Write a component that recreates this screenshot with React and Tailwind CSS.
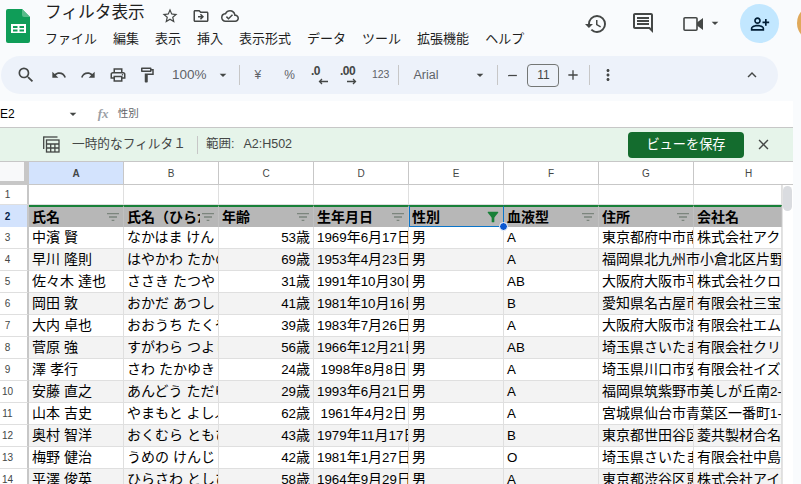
import {
  MdSearch, MdUndo, MdRedo, MdOutlineLocalPrintshop, MdOutlineFormatPaint, MdStarBorder, MdOutlineDriveFileMove,
  MdOutlineCloudDone, MdHistory, MdOutlineComment, MdOutlinePersonAddAlt, MdFilterList,
  MdFilterAlt, MdClose, MdMoreVert, MdExpandLess, MdAdd, MdRemove, MdArrowDropDown,
} from 'react-icons/md';

const FONT = { fontFamily: '"Liberation Sans", "Noto Sans CJK JP", sans-serif' };

const menus = ['ファイル', '編集', '表示', '挿入', '表示形式', 'データ', 'ツール', '拡張機能', 'ヘルプ'];
const columns = ['A', 'B', 'C', 'D', 'E', 'F', 'G'];
const headers = ['氏名', '氏名（ひらがな）', '年齢', '生年月日', '性別', '血液型', '住所', '会社名'];

const rows = [
  ['中濱 賢', 'なかはま けん', '53歳', '1969年6月17日', '男', 'A', '東京都府中市南町', '株式会社アクア'],
  ['早川 隆則', 'はやかわ たかのり', '69歳', '1953年4月23日', '男', 'A', '福岡県北九州市小倉北区片野4-1', ''],
  ['佐々木 達也', 'ささき たつや', '31歳', '1991年10月30日', '男', 'AB', '大阪府大阪市平野区', '株式会社クロード'],
  ['岡田 敦', 'おかだ あつし', '41歳', '1981年10月16日', '男', 'B', '愛知県名古屋市中区', '有限会社三宝'],
  ['大内 卓也', 'おおうち たくや', '39歳', '1983年7月26日', '男', 'A', '大阪府大阪市浪速区', '有限会社エムケー'],
  ['菅原 強', 'すがわら つよし', '56歳', '1966年12月21日', '男', 'AB', '埼玉県さいたま市', '有限会社クリエイト'],
  ['澤 孝行', 'さわ たかゆき', '24歳', '1998年8月8日', '男', 'A', '埼玉県川口市安行', '有限会社イズミ'],
  ['安藤 直之', 'あんどう ただゆき', '29歳', '1993年6月21日', '男', 'A', '福岡県筑紫野市美しが丘南2-1', ''],
  ['山本 吉史', 'やまもと よしふみ', '62歳', '1961年4月2日', '男', 'A', '宮城県仙台市青葉区一番町1-3', ''],
  ['奥村 智洋', 'おくむら ともひろ', '43歳', '1979年11月17日', '男', 'B', '東京都世田谷区', '菱共製材合名会社'],
  ['梅野 健治', 'うめの けんじ', '42歳', '1981年1月27日', '男', 'O', '埼玉県さいたま市', '有限会社中島商事'],
  ['平澤 俊英', 'ひらさわ としひで', '58歳', '1964年9月29日', '男', 'A', '東京都渋谷区恵比寿', '株式会社アイテム'],
];

const SheetsLogo = () => (
  <svg width="24" height="34" viewBox="0 0 24 34" className="shrink-0">
    <path d="M2 0h14l8 8v24a2 2 0 0 1-2 2H2a2 2 0 0 1-2-2V2a2 2 0 0 1 2-2z" fill="#0f9d58" />
    <path d="M16 0l8 8h-6a2 2 0 0 1-2-2z" fill="#57bb8a" />
    <path d="M5 15h15v9H5z M7 17v2h4.5v-2z M13.5 17v2H18v-2z M7 20.5v2h4.5v-2z M13.5 20.5v2H18v-2z" fill="#fff" fillRule="evenodd" />
  </svg>
);

const FilterViewIcon = () => (
  <svg width="17" height="17" viewBox="0 0 17 17" fill="none" stroke="#444746" strokeWidth="1.3">
    <path d="M0.7 0.5v12.5" />
    <path d="M0.5 1h14" />
    <rect x="3.5" y="4" width="12.5" height="12" />
    <path d="M3.5 8h12.5 M3.5 12h12.5 M7.7 8v8 M11.9 8v8" />
  </svg>
);

const VideoIcon = () => (
  <svg width="20" height="14" viewBox="0 0 20 14" className="ml-[28px] mt-[6px] shrink-0">
    <path d="M2 .8h11a1 1 0 0 1 1 1v10.4a1 1 0 0 1-1 1H2a1 1 0 0 1-1-1V1.800a1 1 0 0 1 1-1z" fill="none" stroke="#444746" strokeWidth="1.6" />
    <path d="M14 5.500L20 1v12l-6-4.500z" fill="#444746" />
  </svg>
);

function Decimal({ label, dir }) {
  return (
    <div className="relative w-[17px] h-[20px] shrink-0 text-[12px] font-bold leading-[13px] text-[#444746]">
      <span className="tracking-[-0.5px]">{label}</span>
      <svg width="10" height="7" viewBox="0 0 10 7" className="absolute right-0 bottom-0" fill="none" stroke="#444746" strokeWidth="1.3">
        {dir === 'left' ? <path d="M10 3.5H1.5M4 1L1.5 3.5L4 6" /> : <path d="M0 3.5h8.5M6 1l2.5 2.5L6 6" />}
      </svg>
    </div>
  );
}

function Divider({ className }) {
  return <div className={`w-px h-[20px] bg-[#c7c7c7] shrink-0 ${className}`} />;
}

function FilterIcon({ active }) {
  if (active) return <MdFilterAlt size={16} className="text-[#188038] shrink-0" />;
  return <MdFilterList size={16} className="text-[#7b857d] shrink-0" />;
}

// 英数字だけ少し小さくする
function CellText({ text }) {
  return text.split(/([0-9A-Za-z-]+)/).map((part, i) =>
    i % 2 === 1 ? <span key={i} className="text-[13.33px]">{part}</span> : part
  );
}

function HeaderCell({ text, index }) {
  const selected = index === 4;
  const last = index === 7;
  return (
    <div className={`relative h-[22px] flex items-center pr-[2px] bg-[#b7b7b7] border-t-2 border-t-[#188038] ${selected ? 'pl-[2px] border-[#0b75c9] border-x border-b border-t-[#188038]' : 'pl-[3px] border-r border-r-[#c0c0c0]'}`}>
      <div className="flex-1 min-w-0 overflow-hidden whitespace-nowrap text-[14px] font-bold leading-[20px] text-black">{text}</div>
      {!last && <FilterIcon active={selected} />}
      {selected && <div className="absolute -right-[5px] -bottom-[5px] w-[9px] h-[9px] rounded-full bg-[#0b57d0] border border-white z-10" />}
    </div>
  );
}

function DataRow({ num, row }) {
  const striped = num % 2 === 0;
  const bg = striped ? 'bg-[#f3f3f3]' : 'bg-white';
  const cell = `h-[22px] ${bg} border-r border-b border-[#dfdfdf] text-[14px] leading-[21px] text-black overflow-hidden whitespace-nowrap`;
  return (
    <>
      <div className="h-[22px] bg-white border-r-[2px] border-r-[#c7c7c7] border-b border-b-[#dfdfdf] flex items-center justify-center pr-[12px] text-[10px] text-[#444746]">{num}</div>
      <div className={`${cell} px-[3px]`}>{row[0]}</div>
      <div className={`${cell} px-[3px]`}>{row[1]}</div>
      <div className={`${cell} px-[3px] flex`}><span className="ml-auto shrink-0"><CellText text={row[2]} /></span></div>
      <div className={`${cell} pl-[3px] pr-[1px] flex`}><span className="ml-auto shrink-0"><CellText text={row[3]} /></span></div>
      <div className={`${cell} px-[3px]`}>{row[4]}</div>
      <div className={`${cell} px-[3px]`}><CellText text={row[5]} /></div>
      {row[7] ? (
        <>
          <div className={`${cell} px-[3px]`}>{row[6]}</div>
          <div className={`${cell} px-[3px]`}>{row[7]}</div>
        </>
      ) : (
        <div className={`${cell} px-[3px] col-span-2`}><CellText text={row[6]} /></div>
      )}
    </>
  );
}

export default function App() {
  return (
    <div className="w-[801px] h-[484px] overflow-hidden bg-[#f9fbfd] text-[#1f1f1f]" style={FONT}>
      {/* タイトルとメニュー */}
      <div className="h-[56px] flex">
        <div className="pl-[6px] pt-[9px]"><SheetsLogo /></div>
        <div className="pl-[15px] flex-1">
          <div className="flex items-center h-[26px]">
            <span className="text-[16.7px] leading-[26px]">フィルタ表示</span>
            <MdStarBorder size={18} className="ml-[16px] mt-[6px] text-[#444746]" />
            <MdOutlineDriveFileMove size={18} className="ml-[13px] mt-[5px] text-[#444746]" />
            <MdOutlineCloudDone size={18} className="ml-[11px] mt-[6px] text-[#444746]" />
          </div>
          <div className="flex gap-[16px] text-[13px] leading-[26px]">
            {menus.map(m => <span key={m}>{m}</span>)}
          </div>
        </div>
        <div className="flex items-start pt-[11px]">
          <MdHistory size={24} className="mt-[1px] text-[#444746]" />
          <MdOutlineComment size={24} className="ml-[23px] text-[#444746]" />
          <VideoIcon />
          <MdArrowDropDown size={16} className="ml-[4px] mt-[4px] text-[#444746]" />
          <div className="ml-[17px] -mt-[7px] w-[39px] h-[39px] rounded-full bg-[#c2e7ff] flex items-center justify-center">
            <MdOutlinePersonAddAlt size={20} className="text-[#001d35]" />
          </div>
          <div className="ml-[18px] -mt-[6px] w-[20px] h-[36px] rounded-l-full bg-[#e0a95a] -mr-[16px]" />
        </div>
      </div>

      {/* ツールバー */}
      <div className="ml-[1px] w-[777px] h-[38px] rounded-full bg-[#edf2fa] flex items-center text-[#444746]">
        <MdSearch size={20} className="ml-[15px] shrink-0" />
        <MdUndo size={16} className="ml-[15px] shrink-0" />
        <MdRedo size={16} className="ml-[13px] shrink-0" />
        <MdOutlineLocalPrintshop size={18} className="ml-[13px] shrink-0" />
        <MdOutlineFormatPaint size={18} className="ml-[11px] shrink-0" />
        <span className="ml-[16px] text-[13.5px] text-[#5f6368]">100%</span>
        <MdArrowDropDown size={16} className="ml-[8px] shrink-0" />
        <Divider className="ml-[8px]" />
        <span className="ml-[15px] text-[12px] text-[#5f6368]">¥</span>
        <span className="ml-[23px] text-[12px] text-[#5f6368]">%</span>
        <div className="ml-[16px]"><Decimal label=".0" dir="left" /></div>
        <div className="ml-[12px]"><Decimal label=".00" dir="right" /></div>
        <span className="ml-[15px] text-[10.5px] text-[#5f6368]">123</span>
        <Divider className="ml-[9px]" />
        <span className="ml-[14px] text-[12.5px] text-[#5f6368]">Arial</span>
        <MdArrowDropDown size={16} className="ml-[34px] shrink-0" />
        <Divider className="ml-[9px]" />
        <MdRemove size={15} className="ml-[7px] shrink-0" />
        <div className="ml-[7px] w-[32px] h-[23px] rounded-[4px] border border-[#747775] flex items-center justify-center text-[12px]">11</div>
        <MdAdd size={16} className="ml-[6px] shrink-0" />
        <Divider className="ml-[8px]" />
        <MdMoreVert size={18} className="ml-[9px] shrink-0" />
        <MdExpandLess size={18} className="ml-[126px] shrink-0" />
      </div>

      {/* 数式バー */}
      <div className="mt-[7px] w-[793px] h-[26px] bg-white flex items-center text-[12px]">
        <span className="text-[12px] text-black">E2</span>
        <MdArrowDropDown size={16} className="ml-[50px] text-[#444746]" />
        <span className="ml-[17px] w-[14px] text-[13px] italic font-bold text-[#9aa0a6]" style={{ fontFamily: '"Liberation Serif", serif' }}>fx</span>
        <span className="ml-[6px] text-[10.5px] text-[#5f6368]">性別</span>
      </div>

      {/* フィルタバー */}
      <div className="w-[793px] h-[34px] bg-[#e6f4ea] border-t border-[#c7c7c7] flex items-center text-[#444746]">
        <div className="ml-[43px]"><FilterViewIcon /></div>
        <span className="ml-[12px] text-[12.7px]">一時的なフィルタ１</span>
        <div className="ml-[11px] w-px h-[18px] bg-[#c7c7c7]" />
        <span className="ml-[8px] text-[12.5px]">範囲:</span>
        <span className="ml-[9px] text-[12.5px]">A2:H502</span>
        <button className="ml-auto w-[116px] h-[26px] rounded-[4px] bg-[#146c2e] text-white text-[13.2px]">ビューを保存</button>
        <MdClose size={17} className="ml-[11px] mr-[21px] text-[#444746]" />
      </div>

      {/* シート */}
      <div className="grid grid-cols-[29px_repeat(7,95px)_88px_11px] w-[793px] border-t border-[#c7c7c7]">
        <div className="h-[23px] bg-[#f8f9fa] border-r-[5px] border-r-[#c7c7c7] border-b-[4px] border-b-[#c7c7c7]" />
        {columns.map((c, i) => (
          <div key={c} className={`h-[23px] border-r border-b border-[#c7c7c7] flex items-center justify-center text-[10px] text-[#444746] ${i === 0 ? 'bg-[#d3e3fd] font-bold text-[#041e49]' : 'bg-white'}`}>{c}</div>
        ))}
        <div className="col-span-2 h-[23px] border-b border-[#c7c7c7] bg-white flex items-center justify-center pl-[10px] text-[10px] text-[#444746]">H</div>

        <div className="h-[20px] bg-white border-r-[2px] border-r-[#c7c7c7] border-b border-b-[#dfdfdf] flex items-center justify-center pr-[12px] text-[10px] text-[#444746]">1</div>
        {headers.map(h => <div key={h} className="h-[20px] bg-white border-r border-b border-[#dfdfdf]" />)}
        {/* スクロールバー */}
        <div className="row-span-14 bg-white pt-[1px] border-l border-[#e3e3e3]">
          <div className="w-[9px] h-[25px] rounded-full bg-[#dadce0]" />
        </div>

        <div className="h-[22px] bg-[#d3e3fd] border-r-[2px] border-r-[#c7c7c7] flex items-center justify-center pr-[12px] text-[10px] font-bold text-[#041e49]">2</div>
        {headers.map((h, i) => <HeaderCell key={h} text={h} index={i} />)}

        {rows.map((row, i) => <DataRow key={row[0]} num={i + 3} row={row} />)}
      </div>
    </div>
  );
}
